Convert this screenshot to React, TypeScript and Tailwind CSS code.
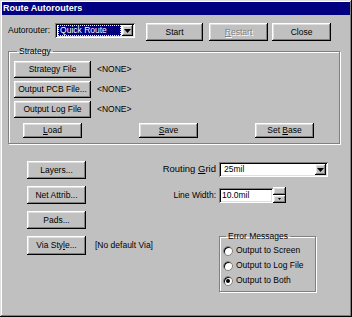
import type { ReactNode } from 'react';

const raised =
  'bg-[#c0c0c0] shadow-[inset_-1px_-1px_0_#000,inset_1px_1px_0_#fff,inset_-2px_-2px_0_#808080,inset_2px_2px_0_#dfdfdf]';
const sunken =
  'bg-white shadow-[inset_1px_1px_0_#808080,inset_-1px_-1px_0_#fff,inset_2px_2px_0_#000,inset_-2px_-2px_0_#dfdfdf]';

function Btn({ children, className = '', disabled = false }: { children: ReactNode; className?: string; disabled?: boolean }) {
  return (
    <button
      className={`${raised} flex items-center justify-center leading-none ${
        disabled ? 'text-[#808080] [text-shadow:1px_1px_0_#fff]' : 'text-black'
      } ${className}`}
    >
      {children}
    </button>
  );
}

function DownArrow() {
  return (
    <svg width="7" height="4" viewBox="0 0 7 4" className="block">
      <path d="M0 0h7L3.5 4z" fill="#000" />
    </svg>
  );
}

function Combo({ value, selected = false, className = '' }: { value: string; selected?: boolean; className?: string }) {
  return (
    <div className={`${sunken} flex items-stretch p-[2px] ${className}`}>
      <div className="flex-1 flex items-center px-[1px]">
        <span
          className={`flex-1 h-full flex items-center pl-[2px] ${
            selected ? 'bg-[#000080] text-white outline-1 outline-dotted outline-[#ffff80] -outline-offset-1' : 'text-black'
          }`}
        >
          {value}
        </span>
      </div>
      <div className={`${raised} w-[11px] flex items-center justify-center`}>
        <DownArrow />
      </div>
    </div>
  );
}

function Radio({ label, checked = false }: { label: string; checked?: boolean }) {
  return (
    <div className="flex items-center gap-[3px] h-[15px]">
      <span className="w-[10px] h-[10px] rounded-full bg-white border border-[#808080] shadow-[inset_1px_1px_0_#000] flex items-center justify-center">
        {checked && <span className="w-[4px] h-[4px] rounded-full bg-black" />}
      </span>
      <span>{label}</span>
    </div>
  );
}

export default function App() {
  return (
    <div
      className="w-[352px] h-[317px] bg-[#c0c0c0] overflow-hidden shadow-[inset_-1px_-1px_0_#000,inset_1px_1px_0_#dfdfdf,inset_-2px_-2px_0_#808080,inset_2px_2px_0_#fff] p-[2px] text-[8.5px] text-black"
      style={{ fontFamily: '"Liberation Sans", Arial, sans-serif' }}
    >
      {/* title bar */}
      <div className="h-[13px] bg-[#000080] text-white font-bold text-[9px] flex items-center pl-[1px] leading-none">
        Route Autorouters
      </div>

      <div className="pl-[6px]">
        {/* top row */}
        <div className="flex items-start mt-[8px] h-[18px]">
          <span className="h-[15px] flex items-center">Autorouter:</span>
          <Combo value="Quick Route" selected className="ml-[5px] w-[80px] h-[15px]" />
          <Btn className="ml-[11px] w-[57px] h-[18px]">Start</Btn>
          <Btn disabled className="ml-[6px] w-[59px] h-[18px]">
            <span>
              <u>R</u>estart
            </span>
          </Btn>
          <Btn className="ml-[4px] w-[59px] h-[18px]">Close</Btn>
        </div>

        {/* strategy group */}
        <fieldset className="mt-[5px] w-[332px] border border-[#808080] shadow-[1px_1px_0_#fff,inset_1px_1px_0_#fff] pl-[5px] pb-[5px] pt-[4px]">
          <legend className="ml-[3px] px-[2px] leading-[11px]">Strategy</legend>
          <div className="flex flex-col gap-[3px]">
            {[
              ['Strategy File', '<NONE>'],
              ['Output PCB File...', '<NONE>'],
              ['Output Log File', '<NONE>'],
            ].map(([b, t]) => (
              <div key={b} className="flex items-center">
                <Btn className="w-[77px] h-[17px]">{b}</Btn>
                <span className="ml-[6px]">{t}</span>
              </div>
            ))}
          </div>
          <div className="flex mt-[5px] ml-[9px] gap-[57px]">
            <Btn className="w-[59px] h-[15px]">
              <span>
                <u>L</u>oad
              </span>
            </Btn>
            <Btn className="w-[59px] h-[15px]">
              <span>
                <u>S</u>ave
              </span>
            </Btn>
            <Btn className="w-[59px] h-[15px]">
              <span>
                Set <u>B</u>ase
              </span>
            </Btn>
          </div>
        </fieldset>

        {/* lower section */}
        <div className="flex">
          <div className="flex flex-col gap-[7px] pt-[17px] pl-[19px] w-[152px]">
            <Btn className="w-[59px] h-[18px]">Layers...</Btn>
            <Btn className="w-[59px] h-[18px]">Net Attrib...</Btn>
            <Btn className="w-[59px] h-[18px]">Pads...</Btn>
            <div className="flex items-center">
              <Btn className="w-[59px] h-[19px] shrink-0">
                <span>
                  Via Sty<u>l</u>e...
                </span>
              </Btn>
              <span className="ml-[9px] whitespace-nowrap">[No default Via]</span>
            </div>
          </div>

          <div className="flex flex-col pt-[18px]">
            <div className="flex items-center h-[15px]">
              <span className="w-[56px] text-right whitespace-nowrap text-[9.5px]">
                Routing <u>G</u>rid
              </span>
              <Combo value="25mil" className="ml-[3px] w-[109px] h-[15px]" />
            </div>
            <div className="flex items-center h-[16px] mt-[10px]">
              <span className="w-[56px] text-right whitespace-nowrap">Line Width:</span>
              <div className={`${sunken} ml-[3px] w-[54px] h-[15px] flex items-center pl-[3px]`}>10.0mil</div>
              <div className="flex flex-col w-[13px] h-[16px]">
                <Btn className="h-[8px] w-[13px]"> </Btn>
                <Btn className="h-[8px] w-[13px]">
                  <svg width="3" height="2" viewBox="0 0 3 2" className="block">
                    <path d="M0 0h3L1.5 2z" fill="#000" />
                  </svg>
                </Btn>
              </div>
            </div>

            <fieldset className="mt-[28px] ml-[59px] w-[97px] border border-[#808080] shadow-[1px_1px_0_#fff,inset_1px_1px_0_#fff] pl-[3px] pb-[3px] pt-[1px]">
              <legend className="ml-[3px] px-[2px] leading-[11px]">Error Messages</legend>
              <Radio label="Output to Screen" />
              <Radio label="Output to Log File" />
              <Radio label="Output to Both" checked />
            </fieldset>
          </div>
        </div>
      </div>
    </div>
  );
}
